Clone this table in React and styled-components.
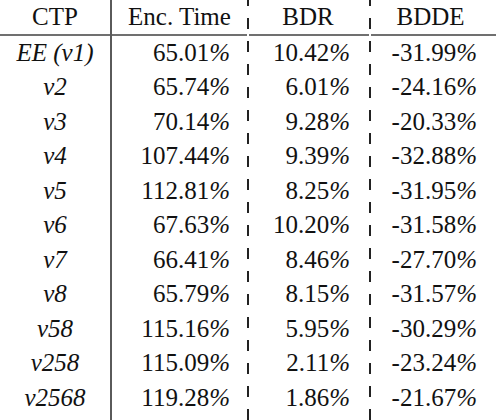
import React from 'react'
import styled, { createGlobalStyle } from 'styled-components'

const Global = createGlobalStyle`
    html, body {
        margin: 0;
        padding: 0;
        background: #fff;
    }
`;

const Table = styled.div`
    display: flex;
    width: 496px;
    height: 420px;
    font-family: 'Liberation Serif', 'Times New Roman', Times, 'DejaVu Serif', serif;
    font-size: 25px;
    color: #111;
`;

const Column = styled.div`
    box-sizing: border-box;
    display: flex;
    flex-direction: column;
    width: ${p => p.$width}px;
    flex: none;
    ${p => p.$rule === 'solid' && `
        border-left: 2px solid #5a5a5a;
    `}
    ${p => p.$rule === 'dashed' && `
        padding-left: 2px;
        background-image: linear-gradient(to bottom, #222 0 11px, transparent 11px 23px);
        background-size: 2px 23px;
        background-position: 0 -5px;
        background-repeat: repeat-y;
    `}
`;

const Head = styled.div`
    box-sizing: border-box;
    height: 35.5px;
    line-height: 33.5px;
    border-bottom: 2px solid #707070;
    text-align: center;
    padding-right: ${p => p.$pad || 0}px;
    white-space: nowrap;
`;

const Cell = styled.div`
    height: 34.5px;
    line-height: 34.5px;
    white-space: nowrap;
    text-align: ${p => p.$align};
    padding-right: ${p => p.$pad}px;
    font-style: ${p => (p.$italic ? 'italic' : 'normal')};
`;

const Pct = styled.span`
    font-style: italic;
`;

const rows = [
    ['EE (v1)', '65.01%', '10.42%', '-31.99%'],
    ['v2', '65.74%', '6.01%', '-24.16%'],
    ['v3', '70.14%', '9.28%', '-20.33%'],
    ['v4', '107.44%', '9.39%', '-32.88%'],
    ['v5', '112.81%', '8.25%', '-31.95%'],
    ['v6', '67.63%', '10.20%', '-31.58%'],
    ['v7', '66.41%', '8.46%', '-27.70%'],
    ['v8', '65.79%', '8.15%', '-31.57%'],
    ['v58', '115.16%', '5.95%', '-30.29%'],
    ['v258', '115.09%', '2.11%', '-23.24%'],
    ['v2568', '119.28%', '1.86%', '-21.67%'],
]

const columns = [
    { head: 'CTP', width: 110, align: 'center', pad: 0, italic: true },
    { head: 'Enc. Time', width: 137, align: 'right', pad: 17, headPad: 0, rule: 'solid' },
    { head: 'BDR', width: 122, align: 'right', pad: 19, headPad: 2, rule: 'dashed' },
    { head: 'BDDE', width: 127, align: 'right', pad: 19, headPad: 6, rule: 'dashed' },
]

// numbers get their percent sign slanted, like the typeset original
const Value = ({ text }) => {
    if (!text.endsWith('%')) return text
    return (
        <>
            {text.slice(0, -1)}
            <Pct>%</Pct>
        </>
    )
}

const App = () => (
    <>
        <Global />
        <Table>
            {columns.map((col, i) => (
                <Column key={col.head} $width={col.width} $rule={col.rule}>
                    <Head $pad={col.headPad}>{col.head}</Head>
                    {rows.map(row => (
                        <Cell key={row[0]} $align={col.align} $pad={col.pad} $italic={col.italic}>
                            <Value text={row[i]} />
                        </Cell>
                    ))}
                </Column>
            ))}
        </Table>
    </>
)

export default App
